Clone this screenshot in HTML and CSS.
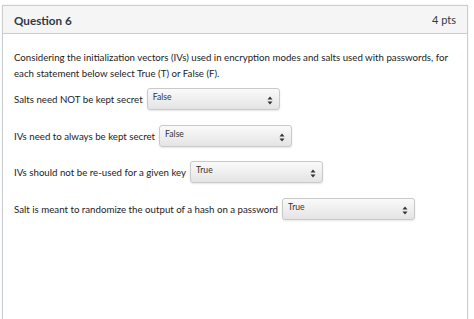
FILE: index.html
```html
<!DOCTYPE html>
<html lang="en">
<head>
    <meta charset="UTF-8">
    <title>Question 6</title>
    <link rel="stylesheet" href="styles.css">
</head>
<body>
    <div class="question">
        <div class="header">
            <span class="title">Question 6</span>
            <span class="points">4 pts</span>
        </div>
        <div class="content">
            <p class="prompt">Considering the initialization vectors (IVs) used in encryption modes and salts used with passwords, for each statement below select True (T) or False (F).</p>
            <div class="row">
                <span>Salts need NOT be kept secret</span>
                <div class="select"><span>False</span><svg width="6" height="9" viewBox="0 0 6 9"><path d="M3 0.5 L5.5 3.5 H0.5 Z M3 8.5 L5.5 5.5 H0.5 Z" fill="#333"/></svg></div>
            </div>
            <div class="row">
                <span>IVs need to always be kept secret</span>
                <div class="select"><span>False</span><svg width="6" height="9" viewBox="0 0 6 9"><path d="M3 0.5 L5.5 3.5 H0.5 Z M3 8.5 L5.5 5.5 H0.5 Z" fill="#333"/></svg></div>
            </div>
            <div class="row">
                <span>IVs should not be re-used for a given key</span>
                <div class="select"><span>True</span><svg width="6" height="9" viewBox="0 0 6 9"><path d="M3 0.5 L5.5 3.5 H0.5 Z M3 8.5 L5.5 5.5 H0.5 Z" fill="#333"/></svg></div>
            </div>
            <div class="row">
                <span>Salt is meant to randomize the output of a hash on a password</span>
                <div class="select"><span>True</span><svg width="6" height="9" viewBox="0 0 6 9"><path d="M3 0.5 L5.5 3.5 H0.5 Z M3 8.5 L5.5 5.5 H0.5 Z" fill="#333"/></svg></div>
            </div>
        </div>
    </div>
</body>
</html>
```
FILE: styles.css
```css
body {
    font-family: Lato, 'Liberation Sans', Arial, sans-serif;
    background: #fff;
    color: #2d3b45;
    margin: 0;
    padding: 5px 6px 0 2px;
}
.question {
    border: 1px solid #c7cdd1;
    border-bottom: none;
    box-shadow: 0 0 2px rgba(0,0,0,0.08);
    height: 320px;
}
.header {
    display: flex;
    justify-content: space-between;
    align-items: center;
    background: #f5f5f5;
    border-bottom: 1px solid #c7cdd1;
    height: 27px;
    padding: 0 11px 0 11px;
}
.title {
    font-size: 11.7px;
    font-weight: 700;
}
.points {
    font-size: 11px;
}
.content {
    padding: 15px 11px;
    font-size: 9.7px;
    color: #222;
}
.prompt {
    margin: 0 0 7px 0;
    line-height: 16px;
}
.row {
    display: flex;
    align-items: center;
    gap: 4px;
    height: 22px;
    margin-bottom: 14.5px;
}
.select {
    box-sizing: border-box;
    width: 133px;
    height: 22px;
    display: flex;
    justify-content: space-between;
    align-items: flex-start;
    padding: 3px 6px 0 5px;
    font-size: 8.6px;
    color: #333;
    border: 1px solid #c9c9c9;
    border-radius: 3px;
    background: linear-gradient(#fafafa, #e4e4e4);
    box-shadow: 0 1px 2px rgba(0,0,0,0.1);
}
.select svg {
    margin-top: 4px;
}
```
